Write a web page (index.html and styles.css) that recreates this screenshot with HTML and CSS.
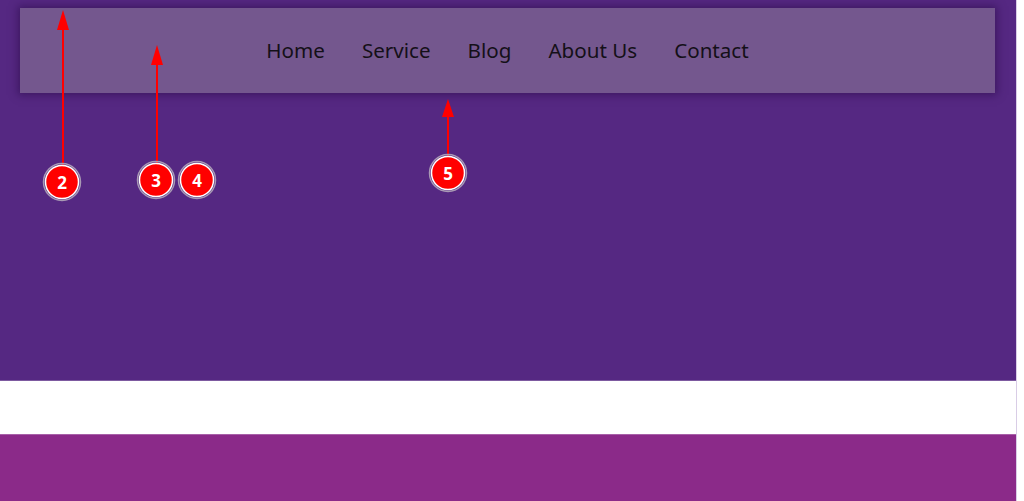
FILE: index.html
```html
<!DOCTYPE html>
<html lang="en">
<head>
<meta charset="utf-8">
<title>Menu</title>
<link rel="stylesheet" href="styles.css">
</head>
<body>
<div class="page">
  <section class="hero">
    <nav class="navbar">
      <ul class="menu">
        <li><a href="#">Home</a></li>
        <li><a href="#">Service</a></li>
        <li><a href="#">Blog</a></li>
        <li><a href="#">About Us</a></li>
        <li><a href="#">Contact</a></li>
      </ul>
    </nav>
  </section>
  <div class="spacer"></div>
  <section class="band"></section>
</div>
<svg class="notes" width="1024" height="501" viewBox="0 0 1024 501">
  <g fill="#ff0000" stroke="none">
    <rect x="62" y="26" width="2" height="140"/>
    <polygon points="63,10 57,30 69,30"/>
    <rect x="156" y="62" width="2" height="101"/>
    <polygon points="157,45 151,65 163,65"/>
    <rect x="447" y="114" width="2" height="42"/>
    <polygon points="448,99 442,117 454,117"/>
  </g>
  <g class="badge">
    <circle cx="62" cy="182" r="18.5" fill="none" stroke="#a899b4" stroke-width="1.5"/>
    <circle cx="62" cy="182" r="16.5" fill="#ff0000" stroke="#ffffff" stroke-width="1.5"/>
    <text x="62" y="188.5">2</text>
    <circle cx="156" cy="180" r="18.5" fill="none" stroke="#a899b4" stroke-width="1.5"/>
    <circle cx="156" cy="180" r="16.5" fill="#ff0000" stroke="#ffffff" stroke-width="1.5"/>
    <text x="156" y="186.5">3</text>
    <circle cx="197" cy="180" r="18.5" fill="none" stroke="#a899b4" stroke-width="1.5"/>
    <circle cx="197" cy="180" r="16.5" fill="#ff0000" stroke="#ffffff" stroke-width="1.5"/>
    <text x="197" y="186.5">4</text>
    <circle cx="448" cy="173" r="18.5" fill="none" stroke="#a899b4" stroke-width="1.5"/>
    <circle cx="448" cy="173" r="16.5" fill="#ff0000" stroke="#ffffff" stroke-width="1.5"/>
    <text x="448" y="179.5">5</text>
  </g>
</svg>
</body>
</html>
```

FILE: styles.css
```css
html, body {
  margin: 0;
  padding: 0;
  background: #ffffff;
}

body {
  position: relative;
  width: 1024px;
  height: 501px;
  overflow: hidden;
  font-family: "Noto Sans", "DejaVu Sans", sans-serif;
}

.page {
  width: 1016px;
  border-right: 1px solid #d9cde6;
}

.hero {
  height: 381px;
  background: #552882;
  padding: 8px 21px 0 20px;
  box-sizing: border-box;
  border-bottom: 1px solid #7d5aa0;
}

.navbar {
  height: 85px;
  background: #74578e;
  box-shadow: 0 0 8px 2px rgba(40, 10, 70, 0.55);
  display: flex;
  align-items: center;
  justify-content: center;
}

.menu {
  list-style: none;
  margin: 0;
  padding: 0 0 1px 0;
  display: flex;
  gap: 37px;
}

.menu a {
  color: #141018;
  text-decoration: none;
  font-size: 20.6px;
  font-weight: 400;
  letter-spacing: 0;
}

.spacer {
  height: 53px;
  background: #ffffff;
}

.band {
  height: 67px;
  background: #8b2a89;
  border-top: 1px solid #a860a8;
}

.notes {
  position: absolute;
  left: 0;
  top: 0;
  pointer-events: none;
}

.badge text {
  fill: #ffffff;
  font-family: "Open Sans", "DejaVu Sans", sans-serif;
  font-weight: 700;
  font-size: 17px;
  text-anchor: middle;
}
```
